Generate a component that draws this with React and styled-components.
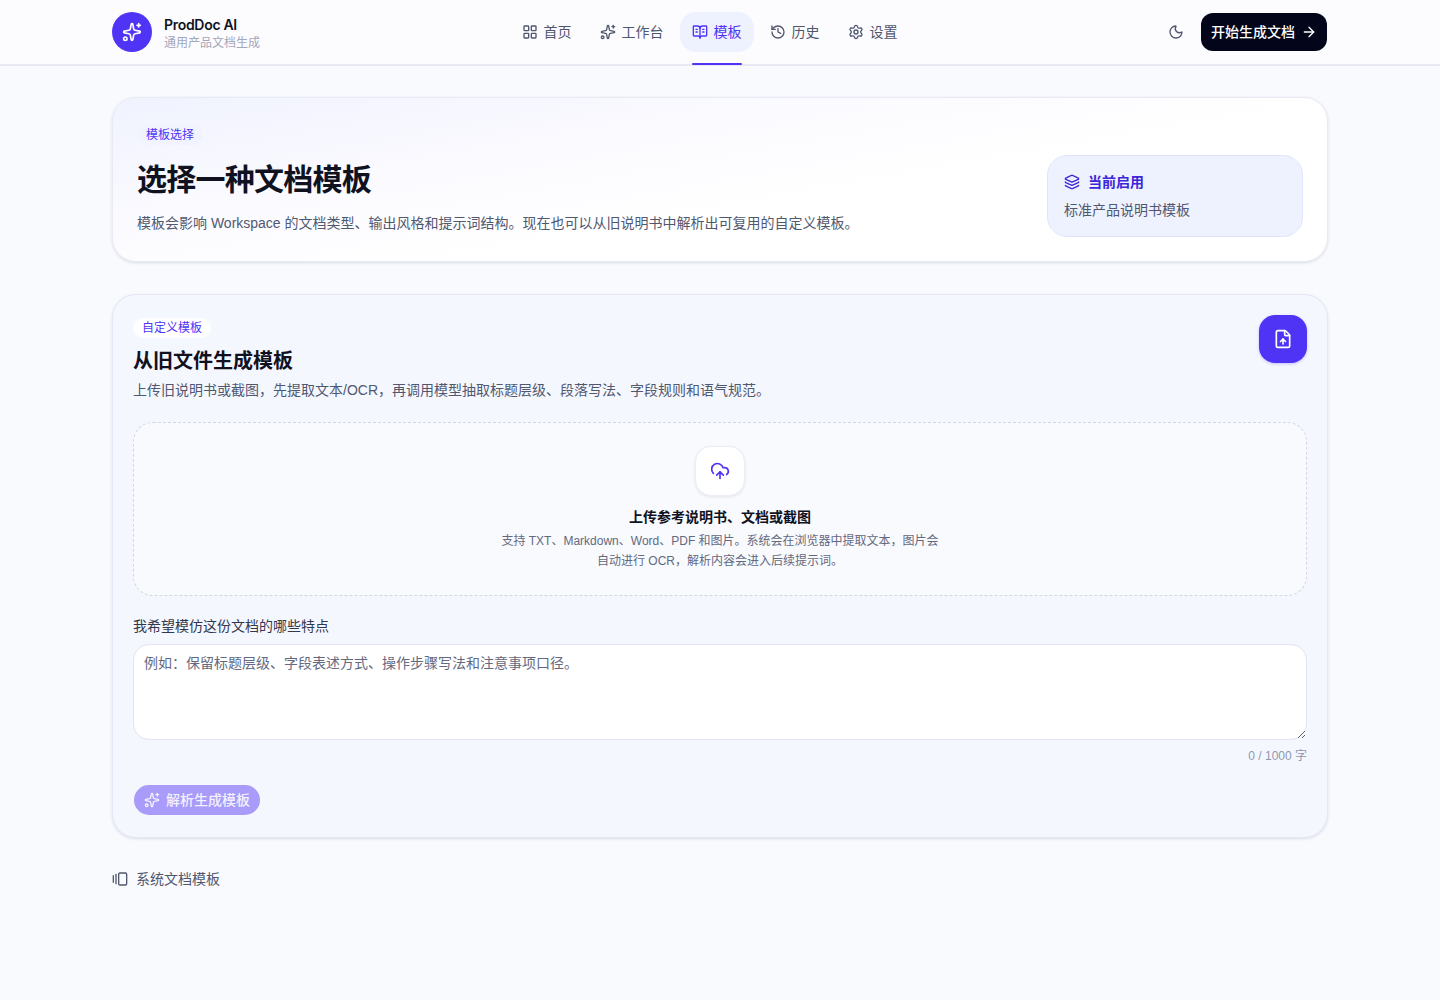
import React from "react";
import styled, { createGlobalStyle } from "styled-components";
import { Sparkles, LayoutGrid, BookOpenText, History, Settings, Moon, ArrowRight, Layers, FileUp, CloudUpload, GalleryHorizontalEnd } from "lucide-react";

const FONT = `"Liberation Sans", "Noto Sans CJK SC", sans-serif`;

const Global = createGlobalStyle`
  * { box-sizing: border-box; }
  html, body { margin: 0; padding: 0; }
  body {
    background: #f9fafe;
    font-family: ${FONT};
    color: #0f1222;
  }
`;
const Page = styled.div`min-height: 1000px;`;
const Header = styled.header`
  height: 66px;
  background: #fcfcff;
  border-bottom: 2px solid #e7e9f3;
`;
const HeaderInner = styled.div`
  width: 1216px;
  height: 64px;
  margin: 0 auto;
  display: flex;
  justify-content: space-between;
  align-items: center;
`;
const Brand = styled.div`display: flex; align-items: center; gap: 12px;`;
const LogoMark = styled.div`
  width: 40px; height: 40px; border-radius: 20px;
  background: #4f34f6; color: #fff;
  display: flex; align-items: center; justify-content: center;
`;
const BrandText = styled.div`display: flex; flex-direction: column;`;
const BrandName = styled.div`font-family: Inter, ${FONT}; font-size: 14px; font-weight: 600; line-height: 21px; letter-spacing: -0.3px; color: #0f1222;`;
const BrandSub = styled.div`font-size: 12px; line-height: 16px; color: #a2a7ba;`;
const Nav = styled.nav`display: flex; align-items: center; gap: 4px; height: 64px;`;
const NavItem = styled.a`
  position: relative;
  height: 40px;
  padding: 0 12px;
  border-radius: 16px;
  display: flex; align-items: center; gap: 6px;
  font-size: 14px;
  line-height: 20px;
  color: ${p => p.$active ? "#4f34f6" : "#4f566e"};
  background: ${p => p.$active ? "#eef1fe" : "transparent"};
  ${p => p.$active ? `&::after {
    content: ""; position: absolute; left: 12px; right: 12px; bottom: -13px; height: 2px;
    background: #4f34f6; border-radius: 2px;
  }` : ""}
`;
const Actions = styled.div`display: flex; align-items: center; gap: 8px; padding-right: 1px;`;
const ThemeBtn = styled.button`
  width: 34px; height: 34px; border: 0; background: none; padding: 0; color: #4f566e;
  display: flex; align-items: center; justify-content: center;
`;
const Cta = styled.button`
  height: 38px; padding: 0 10px; border: 0; border-radius: 12px;
  background: #03051b; color: #fff; font: 500 14px/20px ${FONT};
  display: flex; align-items: center; gap: 6px;
`;
const Main = styled.main`
  width: 1216px; margin: 31px auto 0;
  display: flex; flex-direction: column;
`;
const Hero = styled.section`
  height: 165px;
  border-radius: 24px;
  border: 1px solid #e8eaf4;
  box-shadow: 0 1px 3px rgba(30,35,70,.14);
  background: linear-gradient(170deg, #f0f2fe 0%, #fbfbff 35%, #ffffff 60%);
  padding: 24px;
  display: flex; justify-content: space-between; align-items: flex-end;
`;
const HeroLeft = styled.div`display: flex; flex-direction: column; align-items: flex-start;`;
const Badge = styled.span`
  display: inline-block;
  height: 20px; line-height: 20px; padding: 0 9px;
  border-radius: 10px;
  background: ${p => p.$white ? "#fff" : "#f1f3fe"};
  color: #4f34f6;
  font-size: 12px;
`;
const HeroTitle = styled.h1`
  margin: 13px 0 0; font-size: 30px; line-height: 44px; font-weight: 700; color: #10121f; letter-spacing: -0.75px;
`;
const HeroDesc = styled.p`
  margin: 10px 0 3px; font-size: 14px; line-height: 22px; color: #505870;
`;
const Current = styled.div`
  width: 256px; height: 82px;
  border-radius: 20px;
  border: 1px solid #e0e5fb;
  background-color: #eef1fe;
  background-image: radial-gradient(circle, #e6e9fa 0.5px, transparent 0.7px);
  background-size: 8px 8px;
  padding: 16px;
`;
const CurrentHead = styled.div`
  display: flex; align-items: center; gap: 8px;
  font-size: 14px; font-weight: 700; color: #3d25d8; line-height: 20px;
`;
const CurrentBody = styled.div`margin-top: 8px; font-size: 14px; line-height: 20px; color: #505870;`;
const Panel = styled.section`
  margin-top: 32px;
  height: 544px;
  border-radius: 24px;
  border: 1px solid #e3e7f6;
  box-shadow: 0 1px 3px rgba(30,35,70,.12);
  background: #f5f7ff;
  padding: 20px;
`;
const PanelHead = styled.div`display: flex; justify-content: space-between; align-items: flex-start;`;
const PanelText = styled.div`display: flex; flex-direction: column; align-items: flex-start; padding-top: 3px;`;
const PanelTitle = styled.h2`margin: 9px 0 0; font-size: 20px; line-height: 28px; font-weight: 700; color: #10121f;`;
const PanelDesc = styled.p`margin: 5px 0 0; font-size: 14px; line-height: 20px; color: #505870;`;
const FileBtn = styled.button`
  width: 48px; height: 48px; border: 0; border-radius: 16px; background: #4f34f6; color: #fff; padding: 0;
  display: flex; align-items: center; justify-content: center;
  box-shadow: 0 1px 3px rgba(79,52,246,.3);
`;
const Drop = styled.div`
  margin-top: 22px; height: 174px;
  border: 1px dashed #d3d7e4; border-radius: 20px;
  background: #f9fafe;
  display: flex; flex-direction: column; align-items: center; padding-top: 23px;
`;
const DropIcon = styled.div`
  width: 50px; height: 50px; border-radius: 16px; background: #fff; color: #4f34f6;
  border: 1px solid #eceef6; box-shadow: 0 1px 3px rgba(30,35,70,.1);
  display: flex; align-items: center; justify-content: center;
`;
const DropTitle = styled.div`margin-top: 11px; font-size: 14px; line-height: 20px; font-weight: 700; color: #10121f;`;
const DropDesc = styled.div`margin-top: 4px; width: 448px; text-align: center; font-size: 12px; line-height: 20px; color: #636980;`;
const Label = styled.label`display: block; margin-top: 20px; font-size: 14px; line-height: 20px; color: #32374d;`;
const Area = styled.textarea`
  display: block; width: 100%; height: 96px; margin-top: 8px; padding: 8px 10px;
  border: 1px solid #e2e4ee; border-radius: 16px; background: #fff;
  font: 14px/20px ${FONT}; color: #10121f;
  &::placeholder { color: #636980; opacity: 1; }
`;
const Count = styled.div`margin-top: 8px; text-align: right; font-size: 12px; line-height: 16px; color: #8e98b0;`;
const Generate = styled.button`
  margin: 21px 0 0 1px; height: 30px; padding: 0 10px; border: 0; border-radius: 15px;
  background: #a89bf9; color: #f3f1fe;
  font: 500 14px/20px ${FONT};
  display: flex; align-items: center; gap: 6px;
`;
const SectionLabel = styled.div`
  margin-top: 31px; display: flex; align-items: center; gap: 8px;
  font-size: 14px; line-height: 20px; color: #4f566e;
`;

const navs = [
  { icon: LayoutGrid, label: "首页" },
  { icon: Sparkles, label: "工作台" },
  { icon: BookOpenText, label: "模板", active: true },
  { icon: History, label: "历史" },
  { icon: Settings, label: "设置" },
];

export default function App() {
  return (
    <Page>
      <Global />
      <Header>
        <HeaderInner>
          <Brand>
            <LogoMark><Sparkles size={20} /></LogoMark>
            <BrandText>
              <BrandName>ProdDoc AI</BrandName>
              <BrandSub>通用产品文档生成</BrandSub>
            </BrandText>
          </Brand>
          <Nav>
            {navs.map(n => (
              <NavItem key={n.label} $active={n.active}>
                <n.icon size={16} />
                {n.label}
              </NavItem>
            ))}
          </Nav>
          <Actions>
            <ThemeBtn aria-label="theme"><Moon size={16} /></ThemeBtn>
            <Cta>开始生成文档<ArrowRight size={16} /></Cta>
          </Actions>
        </HeaderInner>
      </Header>
      <Main>
        <Hero>
          <HeroLeft>
            <Badge>模板选择</Badge>
            <HeroTitle>选择一种文档模板</HeroTitle>
            <HeroDesc>模板会影响 Workspace 的文档类型、输出风格和提示词结构。现在也可以从旧说明书中解析出可复用的自定义模板。</HeroDesc>
          </HeroLeft>
          <Current>
            <CurrentHead><Layers size={16} />当前启用</CurrentHead>
            <CurrentBody>标准产品说明书模板</CurrentBody>
          </Current>
        </Hero>
        <Panel>
          <PanelHead>
            <PanelText>
              <Badge $white>自定义模板</Badge>
              <PanelTitle>从旧文件生成模板</PanelTitle>
              <PanelDesc>上传旧说明书或截图，先提取文本/OCR，再调用模型抽取标题层级、段落写法、字段规则和语气规范。</PanelDesc>
            </PanelText>
            <FileBtn aria-label="file"><FileUp size={20} /></FileBtn>
          </PanelHead>
          <Drop>
            <DropIcon><CloudUpload size={20} /></DropIcon>
            <DropTitle>上传参考说明书、文档或截图</DropTitle>
            <DropDesc>支持 TXT、Markdown、Word、PDF 和图片。系统会在浏览器中提取文本，图片会自动进行 OCR，解析内容会进入后续提示词。</DropDesc>
          </Drop>
          <Label>我希望模仿这份文档的哪些特点</Label>
          <Area placeholder="例如：保留标题层级、字段表述方式、操作步骤写法和注意事项口径。" />
          <Count>0 / 1000 字</Count>
          <Generate><Sparkles size={16} />解析生成模板</Generate>
        </Panel>
        <SectionLabel><GalleryHorizontalEnd size={16} />系统文档模板</SectionLabel>
      </Main>
    </Page>
  );
}
